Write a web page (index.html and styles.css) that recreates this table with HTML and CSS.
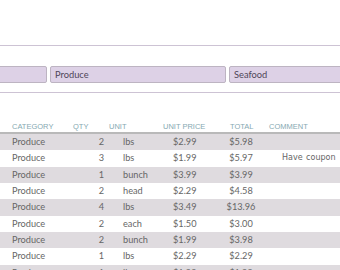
FILE: index.html
```html
<!DOCTYPE html>
<html>
<head>
<meta charset="utf-8">
<link rel="stylesheet" href="styles.css">
</head>
<body>
<div class="page">
  <div class="rule rule-top"></div>
  <div class="filters">
    <div class="box box-first"></div>
    <div class="box">Produce</div>
    <div class="box">Seafood</div>
  </div>
  <div class="rule rule-bottom"></div>
  <div class="grid">
    <div class="hd c1">Category</div><div class="hd c2">Qty</div><div class="hd c3">Unit</div><div class="hd c4">Unit Price</div><div class="hd c5">Total</div><div class="hd c6">Comment</div>

    <div class="row alt"><div class="c1">Produce</div><div class="c2">2</div><div class="c3">lbs</div><div class="c4">$2.99</div><div class="c5">$5.98</div><div class="c6"></div></div>
    <div class="row"><div class="c1">Produce</div><div class="c2">3</div><div class="c3">lbs</div><div class="c4">$1.99</div><div class="c5">$5.97</div><div class="c6 note">Have coupon</div></div>
    <div class="row alt"><div class="c1">Produce</div><div class="c2">1</div><div class="c3">bunch</div><div class="c4">$3.99</div><div class="c5">$3.99</div><div class="c6"></div></div>
    <div class="row"><div class="c1">Produce</div><div class="c2">2</div><div class="c3">head</div><div class="c4">$2.29</div><div class="c5">$4.58</div><div class="c6"></div></div>
    <div class="row alt"><div class="c1">Produce</div><div class="c2">4</div><div class="c3">lbs</div><div class="c4">$3.49</div><div class="c5">$13.96</div><div class="c6"></div></div>
    <div class="row"><div class="c1">Produce</div><div class="c2">2</div><div class="c3">each</div><div class="c4">$1.50</div><div class="c5">$3.00</div><div class="c6"></div></div>
    <div class="row alt"><div class="c1">Produce</div><div class="c2">2</div><div class="c3">bunch</div><div class="c4">$1.99</div><div class="c5">$3.98</div><div class="c6"></div></div>
    <div class="row"><div class="c1">Produce</div><div class="c2">1</div><div class="c3">lbs</div><div class="c4">$2.29</div><div class="c5">$2.29</div><div class="c6"></div></div>
    <div class="row alt"><div class="c1">Produce</div><div class="c2">1</div><div class="c3">lbs</div><div class="c4">$1.99</div><div class="c5">$1.99</div><div class="c6"></div></div>
  </div>
</div>
</body>
</html>
```
FILE: styles.css
```css
html, body {
  margin: 0;
  padding: 0;
  background: #ffffff;
}
.page {
  width: 340px;
  height: 270px;
  overflow: hidden;
  font-family: Lato, "Liberation Sans", sans-serif;
  padding-top: 45px;
  box-sizing: border-box;
}
.rule {
  height: 1px;
  background: #cdc3d4;
}
.filters {
  display: flex;
  gap: 3px;
  margin-top: 20px;
  margin-left: -20px;
  width: 460px;
}
.box {
  box-sizing: border-box;
  height: 17px;
  width: 176px;
  flex: none;
  background: #ddd1e6;
  border: 1px solid #bdb4c2;
  border-radius: 2px;
  padding-left: 4px;
  font-size: 9.3px;
  line-height: 15px;
  color: #4f4658;
}
.box-first {
  width: 67px;
}
.rule-bottom {
  margin-top: 9px;
}
.grid {
  display: grid;
  grid-template-columns: 62px 45px 53px 60px 42px 78px;
  margin-top: 29px;
}
.row {
  display: contents;
}
.hd {
  font-family: "Liberation Sans", Arial, sans-serif;
  font-size: 7.5px;
  text-transform: uppercase;
  color: #86a9b2;
  line-height: 10px;
  border-bottom: 2px solid #b9b9b9;
  white-space: nowrap;
}
.row > div {
  height: 16.33px;
  line-height: 16px;
  font-size: 9.2px;
  color: #666666;
  white-space: nowrap;
}
.row.alt > div {
  background: #dfdbdf;
}
.hd.c1 { padding-left: 12px; }
.hd.c2 { padding-left: 11px; }
.hd.c3 { padding-left: 2px; }
.hd.c4 { padding-left: 3px; }
.hd.c5 { padding-left: 10px; }
.hd.c6 { padding-left: 7px; }
.row .c1 { padding-left: 12px; }
.row .c2 { text-align: right; padding-right: 3px; }
.row .c3 { padding-left: 16px; }
.row .c4 { padding-left: 13px; }
.row .c5 { text-align: center; }
.row .c6 { padding-left: 20px; }
.row .note {
  font-family: "DejaVu Sans", sans-serif;
  font-size: 8px;
  word-spacing: 1px;
}
```
